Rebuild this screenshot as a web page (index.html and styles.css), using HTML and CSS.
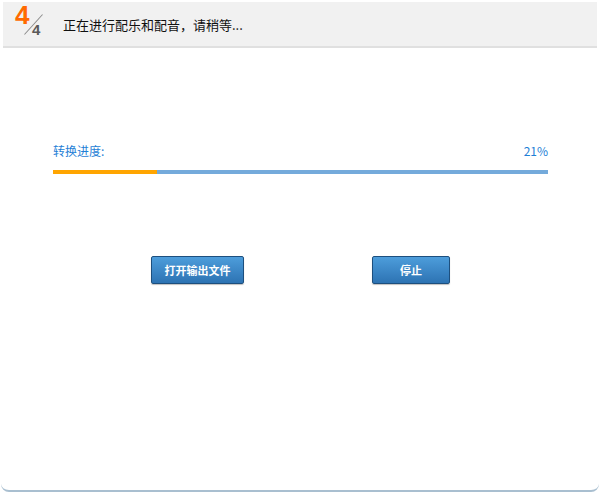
FILE: index.html
```html
<!DOCTYPE html>
<html lang="zh">
<head>
  <meta charset="UTF-8" />
  <title>正在进行配乐和配音</title>
  <link rel="stylesheet" href="styles.css">
</head>
<body>
  <div class="frame">
    <header class="head">
      <div class="step">
        <span class="step-cur">4</span>
        <span class="step-slash"></span>
        <span class="step-all">4</span>
      </div>
      <h1 class="title">正在进行配乐和配音，请稍等...</h1>
    </header>

    <section class="progress">
      <div class="progress-info">
        <span>转换进度:</span>
        <span>21%</span>
      </div>
      <div class="bar">
        <div class="bar-fill" style="width: 21%"></div>
      </div>
    </section>

    <div class="actions">
      <button class="btn btn-open">打开输出文件</button>
      <button class="btn btn-stop">停止</button>
    </div>
  </div>
</body>
</html>
```

FILE: styles.css
```css
html, body {
  margin: 0;
  padding: 0;
  background: #fff;
}
body {
  font-family: "Noto Sans CJK SC", "Liberation Sans", sans-serif;
  width: 600px;
  height: 493px;
  overflow: hidden;
}
.frame {
  box-sizing: border-box;
  height: 492px;
  margin: 0 1px;
  padding-top: 2px;
  border-bottom: 2px solid #a9bfd0;
  border-radius: 0 0 8px 8px;
}
.head {
  display: flex;
  align-items: center;
  height: 44px;
  margin: 0 2px;
  background: #f1f1f1;
  border-bottom: 2px solid #e0e0e0;
}
.step {
  position: relative;
  align-self: stretch;
  width: 30px;
  margin-left: 13px;
}
.step-cur,
.step-all {
  position: absolute;
  line-height: 1;
  font-family: "Liberation Sans", sans-serif;
  font-weight: bold;
}
.step-cur {
  left: -1px;
  top: 0;
  font-size: 26px;
  color: #ff6a00;
}
.step-slash {
  position: absolute;
  left: 17px;
  top: 9px;
  width: 1px;
  height: 27px;
  background: #8a8a8a;
  transform: rotate(42deg);
}
.step-all {
  left: 16px;
  top: 20px;
  font-size: 15px;
  color: #5a5a5a;
}
.title {
  margin: 0 0 0 17px;
  font-size: 13px;
  font-weight: normal;
  color: #111;
}
.progress {
  margin: 95px 51px 0 52px;
}
.progress-info {
  display: flex;
  justify-content: space-between;
  font-size: 12px;
  color: #1f7fd6;
  line-height: 16px;
}
.bar {
  margin-top: 11px;
  height: 4px;
  background: #74aadb;
}
.bar-fill {
  height: 100%;
  background: #ffa500;
}
.actions {
  display: flex;
  margin-top: 82px;
  padding-left: 150px;
}
.btn {
  height: 28px;
  border: 1px solid #1d4f7e;
  border-radius: 2px;
  background: linear-gradient(#4d9ddb, #2d73b3);
  color: #fff;
  font-family: "Noto Sans CJK SC", sans-serif;
  font-size: 11px;
  font-weight: bold;
  padding: 0;
  box-shadow: 0 1px 1px rgba(0, 0, 0, 0.25);
}
.btn-open {
  width: 93px;
}
.btn-stop {
  width: 78px;
  margin-left: 128px;
}
```
